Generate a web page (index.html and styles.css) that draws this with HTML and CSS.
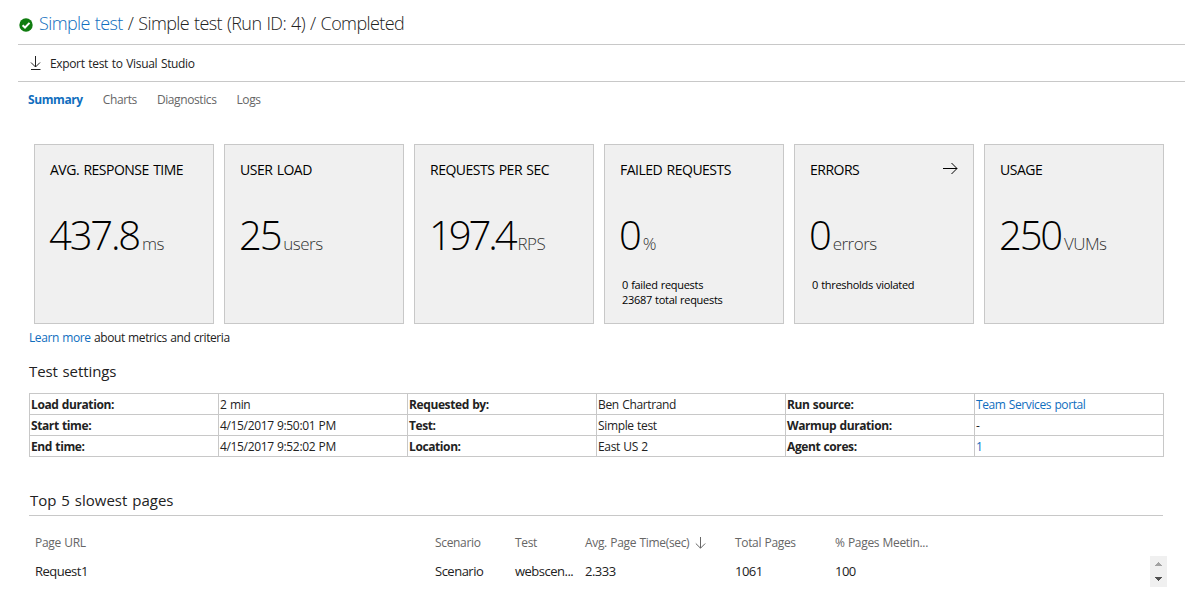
FILE: index.html
```html
<!DOCTYPE html>
<html lang="en">
<head>
<meta charset="utf-8">
<title>Simple test - Load test run</title>
<link rel="stylesheet" href="styles.css">
</head>
<body>
<div class="page">
  <header class="title-bar">
    <svg class="status" width="14" height="14" viewBox="0 0 14 14"><circle cx="7" cy="7" r="6.7" fill="#107c10"/><path d="M3.6 7.2 6 9.5 10.5 4.9" fill="none" stroke="#fff" stroke-width="2"/></svg>
    <h1 class="title"><a class="title-link">Simple test</a> / <span class="title-run">Simple test (Run ID: 4)</span> / <span>Completed</span></h1>
  </header>
  <div class="toolbar">
    <svg width="11" height="15" viewBox="0 0 11 15" fill="none" stroke="#222"><path d="M5.5 0V11M1 6.5 5.5 11 10 6.500M1 13.500H10.500"/></svg>
    <span class="toolbar-label">Export test to Visual Studio</span>
  </div>
  <nav class="tabs">
    <a class="tab tab-active">Summary</a>
    <a class="tab">Charts</a>
    <a class="tab">Diagnostics</a>
    <a class="tab">Logs</a>
  </nav>
  <section class="cards">
    <article class="card"><h2 class="card-title">AVG. RESPONSE TIME</h2><p class="metric"><span class="value">437.8</span><span class="unit">ms</span></p></article>
    <article class="card"><h2 class="card-title">USER LOAD</h2><p class="metric"><span class="value">25</span><span class="unit">users</span></p></article>
    <article class="card"><h2 class="card-title">REQUESTS PER SEC</h2><p class="metric"><span class="value value-tight">197.4</span><span class="unit">RPS</span></p></article>
    <article class="card"><h2 class="card-title">FAILED REQUESTS</h2><p class="metric"><span class="value">0</span><span class="unit">%</span></p><p class="note">0 failed requests<br>23687 total requests</p></article>
    <article class="card"><h2 class="card-title">ERRORS<svg width="15" height="13" viewBox="0 0 15 13" fill="none" stroke="#000"><path d="M0 6.500H14M8.500 1 14 6.500 8.500 12"/></svg></h2><p class="metric"><span class="value">0</span><span class="unit">errors</span></p><p class="note">0 thresholds violated</p></article>
    <article class="card"><h2 class="card-title">USAGE</h2><p class="metric"><span class="value">250</span><span class="unit">VUMs</span></p></article>
  </section>
  <p class="learn"><a class="link">Learn more</a> about metrics and criteria</p>
  <h2 class="heading">Test settings</h2>
  <div class="settings">
    <b>Load duration:</b><span>2 min</span><b>Requested by:</b><span>Ben Chartrand</span><b>Run source:</b><a class="link">Team Services portal</a>
    <b>Start time:</b><span>4/15/2017 9:50:01 PM</span><b>Test:</b><span>Simple test</span><b>Warmup duration:</b><span>-</span>
    <b>End time:</b><span>4/15/2017 9:52:02 PM</span><b>Location:</b><span>East US 2</span><b>Agent cores:</b><a class="link">1</a>
  </div>
  <h2 class="heading heading-ruled">Top 5 slowest pages</h2>
  <div class="grid-row grid-head">
    <span>Page URL</span><span>Scenario</span><span>Test</span>
    <span class="sorted">Avg. Page Time(sec)<svg width="11" height="12" viewBox="0 0 11 12" fill="none" stroke="#666"><path d="M5.500 0V11M.8 6.500 5.500 11.200 10.200 6.500"/></svg></span>
    <span>Total Pages</span><span>% Pages Meetin...</span>
  </div>
  <div class="grid-body">
    <div class="grid-row">
      <span>Request1</span><span>Scenario</span><span>webscen...</span><span>2.333</span><span>1061</span><span>100</span>
    </div>
    <div class="scroller">
      <svg width="17" height="31" viewBox="0 0 17 31" shape-rendering="crispEdges"><path d="M5 10 8.500 6 12 10Z" fill="#a3a3a3"/><path d="M5 21H12L8.500 25Z" fill="#505050"/></svg>
    </div>
  </div>
</div>
</body>
</html>
```

FILE: styles.css
```css
* { box-sizing: border-box; }
body {
  margin: 0;
  background: #fff;
  color: #222;
  font: 12px/16px "Open Sans", "Noto Sans", sans-serif;
  letter-spacing: -0.4px;
  word-spacing: 0.6px;
}
h1, h2, p { margin: 0; font-weight: 400; }
svg { display: block; flex: none; }
.page { height: 603px; padding-left: 18px; overflow: hidden; }
.title-bar {
  display: flex;
  height: 45px;
  padding-top: 11px;
  border-bottom: 1px solid #c8c8c8;
}
.status { margin: 7px 6px 0 1px; }
.title { font-size: 18px; line-height: 24px; font-weight: 300; letter-spacing: -0.6px; word-spacing: 0.9px; white-space: pre; }
.title-link, .link { color: #106ebe; }
.toolbar {
  display: flex;
  align-items: center;
  gap: 9px;
  height: 37px;
  padding-left: 12px;
  border-bottom: 1px solid #c8c8c8;
}
.toolbar-label { padding-top: 2px; letter-spacing: -0.35px; word-spacing: 1px; }
.tabs { display: flex; gap: 20px; height: 62px; padding: 10px 0 0 10px; color: #666; }
.tab-active { color: #106ebe; font-weight: 700; }
.cards { display: flex; gap: 10px; padding-left: 16px; }
.card {
  width: 180px;
  height: 180px;
  padding: 15px;
  background: #f0f0f0;
  border: 1px solid #c8c8c8;
  color: #000;
}
.card-title { display: flex; justify-content: space-between; height: 20px; font-size: 14px; line-height: 20px; letter-spacing: -0.5px; word-spacing: 1.2px; }
.card-title svg { margin-top: 2px; }
.metric { display: flex; align-items: baseline; height: 54px; margin: 28px 0 0 -1px; font-weight: 300; }
.value { font-size: 40px; line-height: 54px; letter-spacing: -2.2px; }
.value-tight { letter-spacing: -3.1px; }
.unit { margin-left: 3px; font-size: 17px; color: #333; letter-spacing: -0.5px; }
.note { padding: 15px 0 0 2px; font-size: 11px; line-height: 15px; letter-spacing: -0.3px; }
.learn { padding: 6px 0 0 11px; }
.heading { padding: 15px 0 11px 11px; font-size: 15px; line-height: 21px; letter-spacing: -0.1px; word-spacing: 1px; }
.settings {
  display: grid;
  grid-template-columns: repeat(6, 189px);
  grid-auto-rows: 21px;
  width: 1135px;
  margin-left: 11px;
  border: solid #c8c8c8;
  border-width: 1px 0 0 1px;
}
.settings > * { padding: 3px 0 0 1px; line-height: 16px; border: solid #c8c8c8; border-width: 0 1px 1px 0; }
.settings > span { letter-spacing: -0.35px; }
.heading-ruled { width: 1134px; height: 59px; margin-left: 11px; padding: 33px 0 0 1px; border-bottom: 1px solid #c8c8c8; letter-spacing: 0; }
.grid-row { display: grid; grid-template-columns: 400px 80px 70px 150px 100px 110px; padding-left: 17px; }
.grid-head { padding-top: 19px; height: 40px; color: #666; letter-spacing: -0.33px; }
.sorted { display: flex; gap: 6px; }
.sorted svg { margin-top: 2px; }
.grid-body { display: flex; align-items: flex-start; }
.grid-body .grid-row { width: 1132px; padding-top: 7px; font-size: 13px; letter-spacing: -0.5px; }
.scroller { width: 17px; height: 31px; background: #f0f0f0; }
```
